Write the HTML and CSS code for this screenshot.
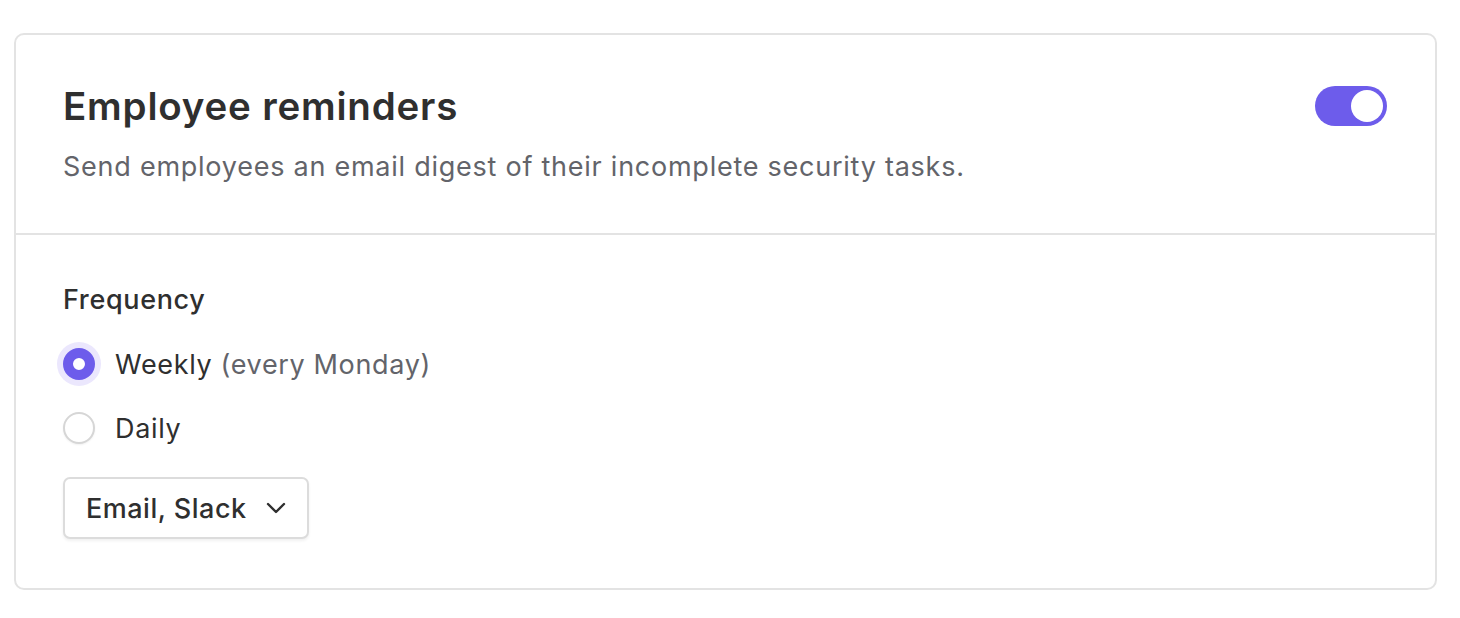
FILE: index.html
```html
<!DOCTYPE html>
<html lang="en">
<head>
    <meta charset="UTF-8">
    <meta name="viewport" content="width=device-width, initial-scale=1.0">
    <title>Employee reminders</title>
    <link rel="stylesheet" href="styles.css">
</head>
<body>
    <div class="card">
        <div class="card-header">
            <div class="header-text">
                <h2>Employee reminders</h2>
                <p class="desc">Send employees an email digest of their incomplete security tasks.</p>
            </div>
            <div class="toggle on"><span class="knob"></span></div>
        </div>
        <div class="card-body">
            <div class="label">Frequency</div>
            <div class="radio-row">
                <span class="radio checked"></span>
                <span class="radio-text">Weekly <span class="muted">(every Monday)</span></span>
            </div>
            <div class="radio-row">
                <span class="radio"></span>
                <span class="radio-text">Daily</span>
            </div>
            <button class="select">
                Email, Slack
                <svg width="20" height="12" viewBox="0 0 20 12" fill="none" stroke="#2f2f2f" stroke-width="2.4" stroke-linecap="round" stroke-linejoin="round"><path d="M2 2l8 8 8-8"/></svg>
            </button>
        </div>
    </div>
</body>
</html>
```

FILE: styles.css
```css
body {
    margin: 0;
    font-family: Inter, "Noto Sans", sans-serif;
    background: white;
    color: #2f2f2f;
}
.card {
    margin: 33px 23px 0 14px;
    border: 2px solid #e3e3e3;
    border-radius: 10px;
    background: white;
}
.card-header {
    display: flex;
    justify-content: space-between;
    align-items: flex-start;
    padding: 48px 48px 49px 47px;
    border-bottom: 2px solid #e3e3e3;
}
h2 {
    margin: 0;
    font-size: 38.5px;
    font-weight: 600;
    line-height: 46px;
    letter-spacing: 0.8px;
    color: #2f2f2f;
}
.desc {
    margin: 21px 0 0;
    font-size: 27px;
    line-height: 34px;
    letter-spacing: 0.75px;
    color: #63646a;
}
.toggle {
    width: 72px;
    height: 40px;
    border-radius: 20px;
    background: #d9d9de;
    margin-top: 3px;
    display: flex;
    align-items: center;
    padding: 4px;
    box-sizing: border-box;
}
.toggle.on {
    background: #6d5ceb;
    justify-content: flex-end;
}
.knob {
    width: 32px;
    height: 32px;
    border-radius: 50%;
    background: white;
}
.card-body {
    padding: 48px 47px 49px 47px;
}
.label {
    font-size: 27px;
    font-weight: 500;
    line-height: 34px;
    letter-spacing: 0.65px;
    color: #2f2f2f;
    margin-bottom: 15px;
}
.radio-row {
    display: flex;
    align-items: center;
    gap: 20px;
    height: 64px;
}
.radio {
    width: 32px;
    height: 32px;
    border-radius: 50%;
    border: 2px solid #d6d6d6;
    box-sizing: border-box;
    background: white;
    box-shadow: 0 1px 2px rgba(0, 0, 0, 0.06);
}
.radio.checked {
    border: 10px solid #6d5ceb;
    box-shadow: 0 0 0 6px #ebe7fd;
}
.radio-text {
    font-size: 27px;
    letter-spacing: 0.65px;
    color: #2f2f2f;
}
.muted {
    color: #63646a;
}
.select {
    margin-top: 17px;
    display: flex;
    align-items: center;
    gap: 19px;
    height: 62px;
    padding: 0 21px 0 21px;
    font-family: Inter, "Noto Sans", sans-serif;
    font-size: 27px;
    font-weight: 500;
    letter-spacing: 0.5px;
    color: #2f2f2f;
    background: white;
    border: 2px solid #dcdcdc;
    border-radius: 7px;
    box-shadow: 0 2px 3px rgba(0, 0, 0, 0.06);
}
```
